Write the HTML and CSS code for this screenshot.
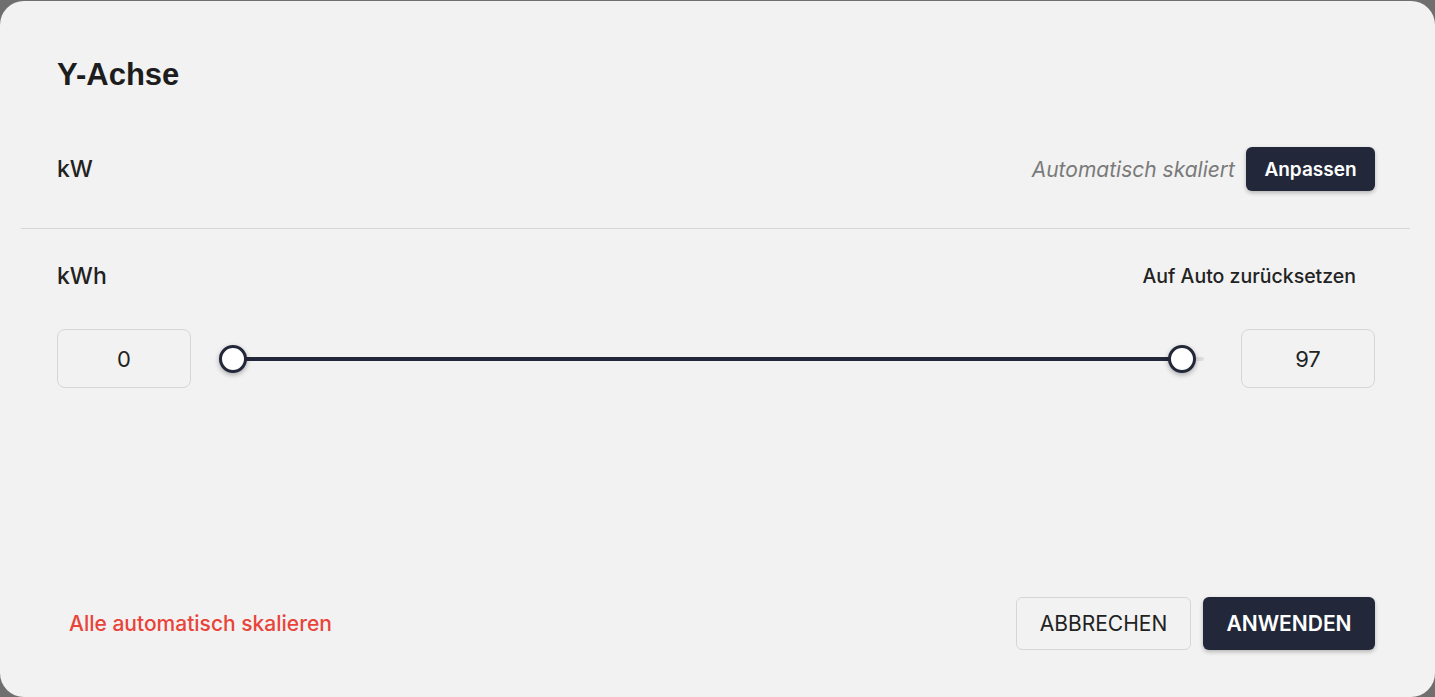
FILE: index.html
```html
<!DOCTYPE html>
<html lang="de">
<head>
<meta charset="utf-8">
<title>Y-Achse</title>
<link rel="stylesheet" href="styles.css">
</head>
<body>
<div class="dialog">
  <h2 class="title">Y-Achse</h2>
  <div class="axis-row">
    <span class="unit">kW</span>
    <div class="axis-actions">
      <span class="auto-note">Automatisch skaliert</span>
      <button class="btn-small">Anpassen</button>
    </div>
  </div>
  <div class="divider"></div>
  <div class="axis-row axis-row-2">
    <span class="unit">kWh</span>
    <span class="reset">Auf Auto zurücksetzen</span>
  </div>
  <div class="range-row">
    <div class="num-box">0</div>
    <div class="slider">
      <div class="track"></div>
      <div class="fill"></div>
      <div class="thumb thumb-left"></div>
      <div class="thumb thumb-right"></div>
    </div>
    <div class="num-box">97</div>
  </div>
  <div class="spacer"></div>
  <div class="footer">
    <span class="reset-all">Alle automatisch skalieren</span>
    <div class="footer-actions">
      <button class="btn-outline">ABBRECHEN</button>
      <button class="btn-primary">ANWENDEN</button>
    </div>
  </div>
</div>
</body>
</html>
```
FILE: styles.css
```css
html, body {
  margin: 0;
  padding: 0;
}
body {
  background: #6f6f6f;
  width: 1435px;
  height: 697px;
  overflow: hidden;
  font-family: Inter, "Liberation Sans", sans-serif;
  color: #1f1f1f;
}
.dialog {
  margin-top: 1px;
  height: 696px;
  box-sizing: border-box;
  background: #f2f2f2;
  border-radius: 24px;
  padding: 50px 60px 47px 57px;
  display: flex;
  flex-direction: column;
}
.title {
  margin: 0;
  font-family: "Liberation Sans", Arial, sans-serif;
  font-size: 31px;
  font-weight: 700;
  line-height: 48px;
  color: #1d1d1d;
}
.axis-row {
  display: flex;
  justify-content: space-between;
  align-items: center;
  margin-top: 48px;
  height: 44px;
}
.unit {
  font-size: 23px;
  font-weight: 500;
  color: #222;
}
.axis-actions {
  display: flex;
  align-items: center;
  gap: 11px;
}
.auto-note {
  font-size: 21px;
  font-style: italic;
  color: #7a7a7a;
}
.btn-small {
  font-family: Inter, "Liberation Sans", sans-serif;
  height: 44px;
  width: 129px;
  border: none;
  border-radius: 6px;
  background: #222839;
  color: #fff;
  font-size: 19px;
  font-weight: 600;
  box-shadow: 0 2px 4px rgba(0,0,0,0.25);
}
.divider {
  height: 1px;
  background: #d7d7d7;
  margin: 37px -35px 0 -36px;
}
.axis-row-2 {
  margin-top: 25px;
  padding-right: 19px;
}
.reset {
  font-size: 19.5px;
  font-weight: 500;
  color: #222;
}
.range-row {
  display: flex;
  align-items: center;
  margin-top: 31px;
  height: 59px;
}
.num-box {
  width: 134px;
  height: 59px;
  box-sizing: border-box;
  border: 1px solid #d6d6d6;
  border-radius: 8px;
  display: flex;
  align-items: center;
  justify-content: center;
  font-size: 22px;
  color: #222;
}
.slider {
  position: relative;
  flex: 1;
  height: 59px;
  margin: 0 37px 0 28px;
}
.track {
  position: absolute;
  left: 0;
  right: 0;
  top: 28px;
  height: 4px;
  background: #dcdcdc;
  border-radius: 2px;
}
.fill {
  position: absolute;
  left: 14px;
  right: 22px;
  top: 28px;
  height: 4px;
  background: #222839;
}
.thumb {
  position: absolute;
  top: 16px;
  width: 22px;
  height: 22px;
  border: 3px solid #222839;
  border-radius: 50%;
  background: #fff;
  box-shadow: 0 2px 5px rgba(0,0,0,0.3);
}
.thumb-left {
  left: 0;
}
.thumb-right {
  right: 8px;
}
.spacer {
  flex: 1;
}
.footer {
  display: flex;
  justify-content: space-between;
  align-items: center;
  height: 53px;
}
.reset-all {
  margin-left: 12px;
  font-size: 21px;
  font-weight: 500;
  color: #e8443a;
}
.footer-actions {
  display: flex;
  gap: 12px;
}
.btn-outline, .btn-primary {
  font-family: Inter, "Liberation Sans", sans-serif;
  height: 53px;
  border-radius: 6px;
  font-size: 21px;
}
.btn-outline {
  width: 175px;
  background: transparent;
  border: 1px solid #d6d6d6;
  color: #222;
  font-weight: 400;
}
.btn-primary {
  width: 172px;
  background: #222839;
  border: none;
  color: #fff;
  font-weight: 600;
  box-shadow: 0 2px 4px rgba(0,0,0,0.25);
}
```
